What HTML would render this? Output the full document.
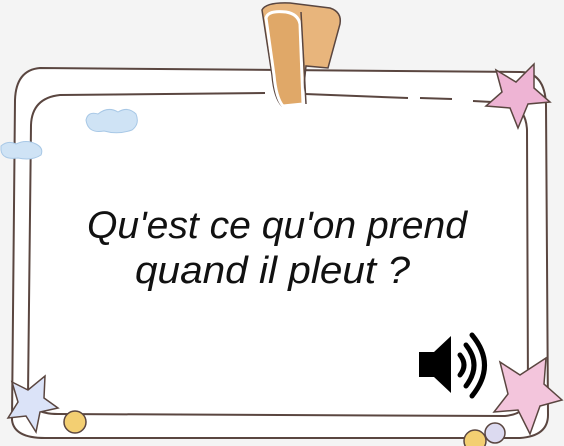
<!DOCTYPE html>
<html><head><meta charset="utf-8"><style>
html,body{margin:0;padding:0;background:#f4f4f4;}
svg{display:block}
</style></head><body>
<svg width="564" height="446" viewBox="0 0 564 446" xmlns="http://www.w3.org/2000/svg">
<rect width="564" height="446" fill="#f4f4f4"/>
<!-- outer frame -->
<path d="M40 68 Q16 70 15 100 L12 420 Q14 438 45 438 L520 438 Q548 436 548 415 L546 105 Q545 72 520 72 Z" fill="#fff" stroke="#5a4640" stroke-width="2"/>
<!-- inner frame -->
<path d="M265 93 L60 95 Q32 98 31 125 L28 395 Q30 414 58 414 L505 416 Q528 414 528 395 L527 130 Q526 110 512 106" fill="none" stroke="#5a4640" stroke-width="2"/>
<path d="M305 94 L408 98 M420 98 L452 99 M473 101 L492 102" stroke="#5a4640" stroke-width="2"/>
<!-- clip -->
<path d="M262 10 Q266 2 290 3 L330 8 Q342 12 340 24 L328 68 L306 66 L302 104 L282 106 Q274 98 272 75 Z" fill="#e8b57c" stroke="#5a4640" stroke-width="1.5"/>
<path d="M266 18 Q268 10 286 12 Q298 14 300 24 L303 104 L283 106 Q276 98 274 75 Z" fill="#e0a868" stroke="#fff" stroke-width="3"/>
<path d="M301 12 L306 104" stroke="#5a4640" stroke-width="1.5"/>
<!-- clouds -->
<path d="M86 120 Q88 111 98 114 Q108 106 118 112 Q128 106 136 114 Q140 124 132 130 Q118 135 104 131 Q88 134 86 120 Z" fill="#cfe3f5" stroke="#a8c8e6" stroke-width="1"/>
<path d="M1 146 Q8 140 16 144 Q26 139 36 144 Q44 148 41 155 Q32 161 18 158 Q2 160 1 150 Z" fill="#cfe3f5" stroke="#a8c8e6" stroke-width="1"/>
<!-- top right star -->
<path d="M534 64 L534 88 L550 102 L528 104 L518 128 L510 108 L486 106 L502 92 L496 70 L516 82 Z" fill="#eeb4d4" stroke="#5a4640" stroke-width="1.5"/>
<!-- bottom left star -->
<path d="M12 382 L28 390 L45 376 L44 398 L58 408 L40 412 L36 432 L26 416 L8 418 L18 402 Z" fill="#dbe3f8" stroke="#5a4640" stroke-width="1.5"/>
<!-- bottom right star -->
<path d="M500 362 L520 375 L546 358 L544 384 L562 400 L540 406 L530 434 L518 410 L494 412 L508 394 Z" fill="#f3c5dc" stroke="#5a4640" stroke-width="1.5"/>
<!-- dots -->
<circle cx="75" cy="422" r="11" fill="#f3cf72" stroke="#5a4640" stroke-width="1.5"/>
<circle cx="495" cy="433" r="10" fill="#dcdaf0" stroke="#5a4640" stroke-width="1.5"/>
<circle cx="475" cy="441" r="11" fill="#f3cf72" stroke="#5a4640" stroke-width="1.5"/>
<!-- text -->
<text x="87" y="238" textLength="380" lengthAdjust="spacingAndGlyphs" font-family="Liberation Sans, sans-serif" font-size="38" font-style="italic" fill="#111">Qu'est ce qu'on prend</text>
<text x="135" y="283" textLength="275" lengthAdjust="spacingAndGlyphs" font-family="Liberation Sans, sans-serif" font-size="38" font-style="italic" fill="#111">quand il pleut ?</text>
<!-- speaker -->
<path d="M419 352 L434 352 L451 336 L451 393 L434 377 L419 377 Z" fill="#000"/>
<path d="M460 355 Q468 365 460 375" fill="none" stroke="#000" stroke-width="5" stroke-linecap="round"/>
<path d="M466 345 Q482 365 466 386" fill="none" stroke="#000" stroke-width="5" stroke-linecap="round"/>
<path d="M472 335 Q497 365 472 396" fill="none" stroke="#000" stroke-width="5" stroke-linecap="round"/>
</svg>
</body></html>
